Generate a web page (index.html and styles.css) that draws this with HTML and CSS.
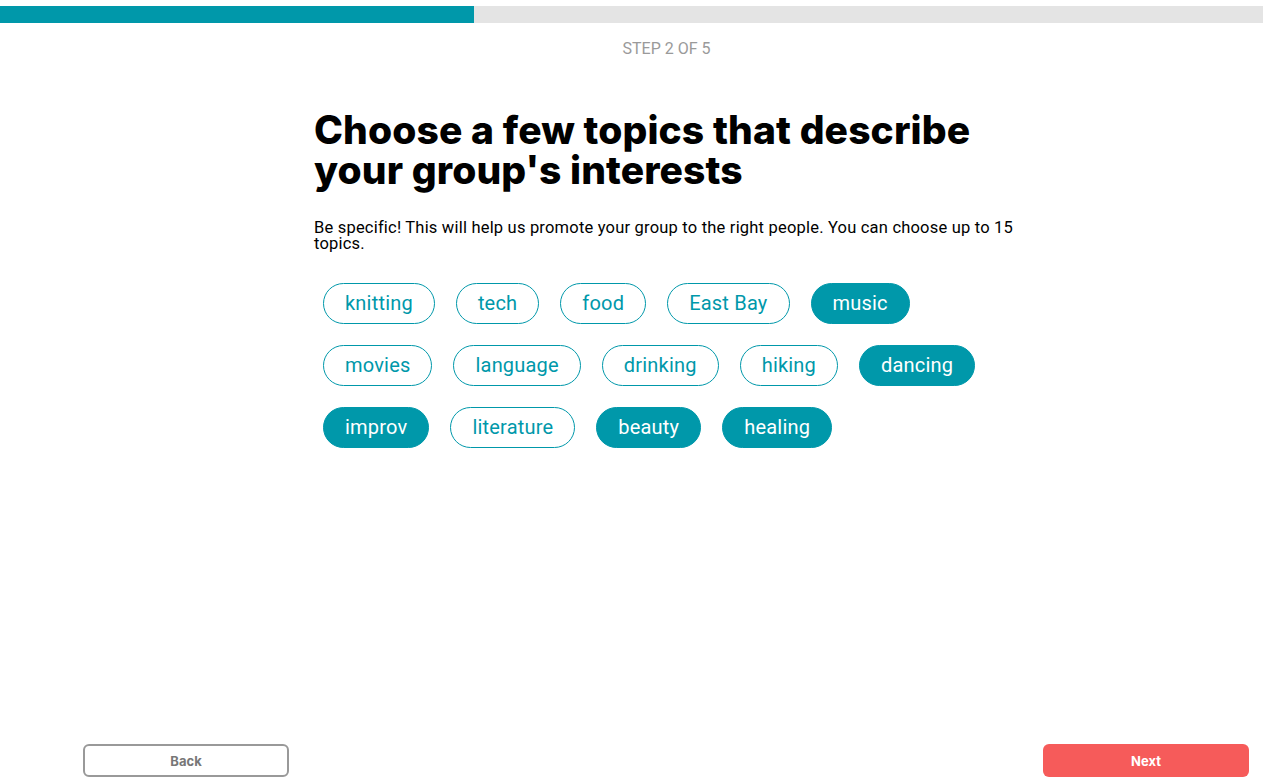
FILE: index.html
```html
<!DOCTYPE html>
<html lang="en">
<head>
<meta charset="utf-8">
<title>Choose topics</title>
<link rel="stylesheet" href="styles.css">
</head>
<body>
<div class="page">
  <div class="progress"><div class="progress-fill" style="width:474px"></div></div>
  <div class="step">STEP 2 OF 5</div>
  <main class="main">
    <div class="content">
      <h1 class="title">Choose a few topics that describe your group's interests</h1>
      <p class="desc">Be specific! This will help us promote your group to the right people. You can choose up to 15 topics.</p>
      <div class="chips">
        <span class="chip">knitting</span>
        <span class="chip">tech</span>
        <span class="chip">food</span>
        <span class="chip">East Bay</span>
        <span class="chip chip-on">music</span>
        <span class="chip">movies</span>
        <span class="chip">language</span>
        <span class="chip">drinking</span>
        <span class="chip">hiking</span>
        <span class="chip chip-on">dancing</span>
        <span class="chip chip-on">improv</span>
        <span class="chip">literature</span>
        <span class="chip chip-on">beauty</span>
        <span class="chip chip-on">healing</span>
      </div>
    </div>
  </main>
  <footer class="footer">
    <button class="btn btn-back">Back</button>
    <button class="btn btn-next">Next</button>
  </footer>
</div>
</body>
</html>
```

FILE: styles.css
```css
* { box-sizing: border-box; }
html, body { margin: 0; padding: 0; background: #fff; }
body { font-family: Roboto, "Liberation Sans", sans-serif; color: #000; }
.page { height: 783px; display: flex; flex-direction: column; padding-top: 6px; }
.progress { height: 17px; background: #e4e4e4; }
.progress-fill { height: 100%; background: #0098aa; }
.step { text-align: center; color: #9a9a9a; font-size: 16px; margin-top: 17px; padding-left: 70px; line-height: 18px; }
.main { flex: 1; display: flex; justify-content: center; padding-left: 65px; }
.content { width: 700px; padding-top: 52px; }
.title { font-family: Inter, sans-serif; font-weight: 800; font-size: 39px; line-height: 40px; letter-spacing: 0.1px; margin: 0; }
.desc { font-size: 16.5px; line-height: 16px; letter-spacing: 0.2px; margin: 30px 0 0; }
.chips { display: flex; flex-wrap: wrap; gap: 21px 21px; margin-top: 31px; padding-left: 9px; width: 680px; }
.chip { height: 41px; border: 1px solid #0098aa; border-radius: 21px; color: #0098aa; font-size: 20px; line-height: 39px; padding: 0 21px; letter-spacing: 0.2px; }
.chip-on { background: #0098aa; color: #fff; }
.footer { display: flex; justify-content: space-between; padding: 0 14px 6px 83px; }
.btn { width: 206px; height: 33px; border-radius: 6px; font-family: Inter, sans-serif; font-weight: 700; font-size: 13px; cursor: pointer; }
.btn-back { background: #fff; border: 2px solid #999; color: #777; }
.btn-next { background: #f65b5a; border: none; color: #fff; }
```
